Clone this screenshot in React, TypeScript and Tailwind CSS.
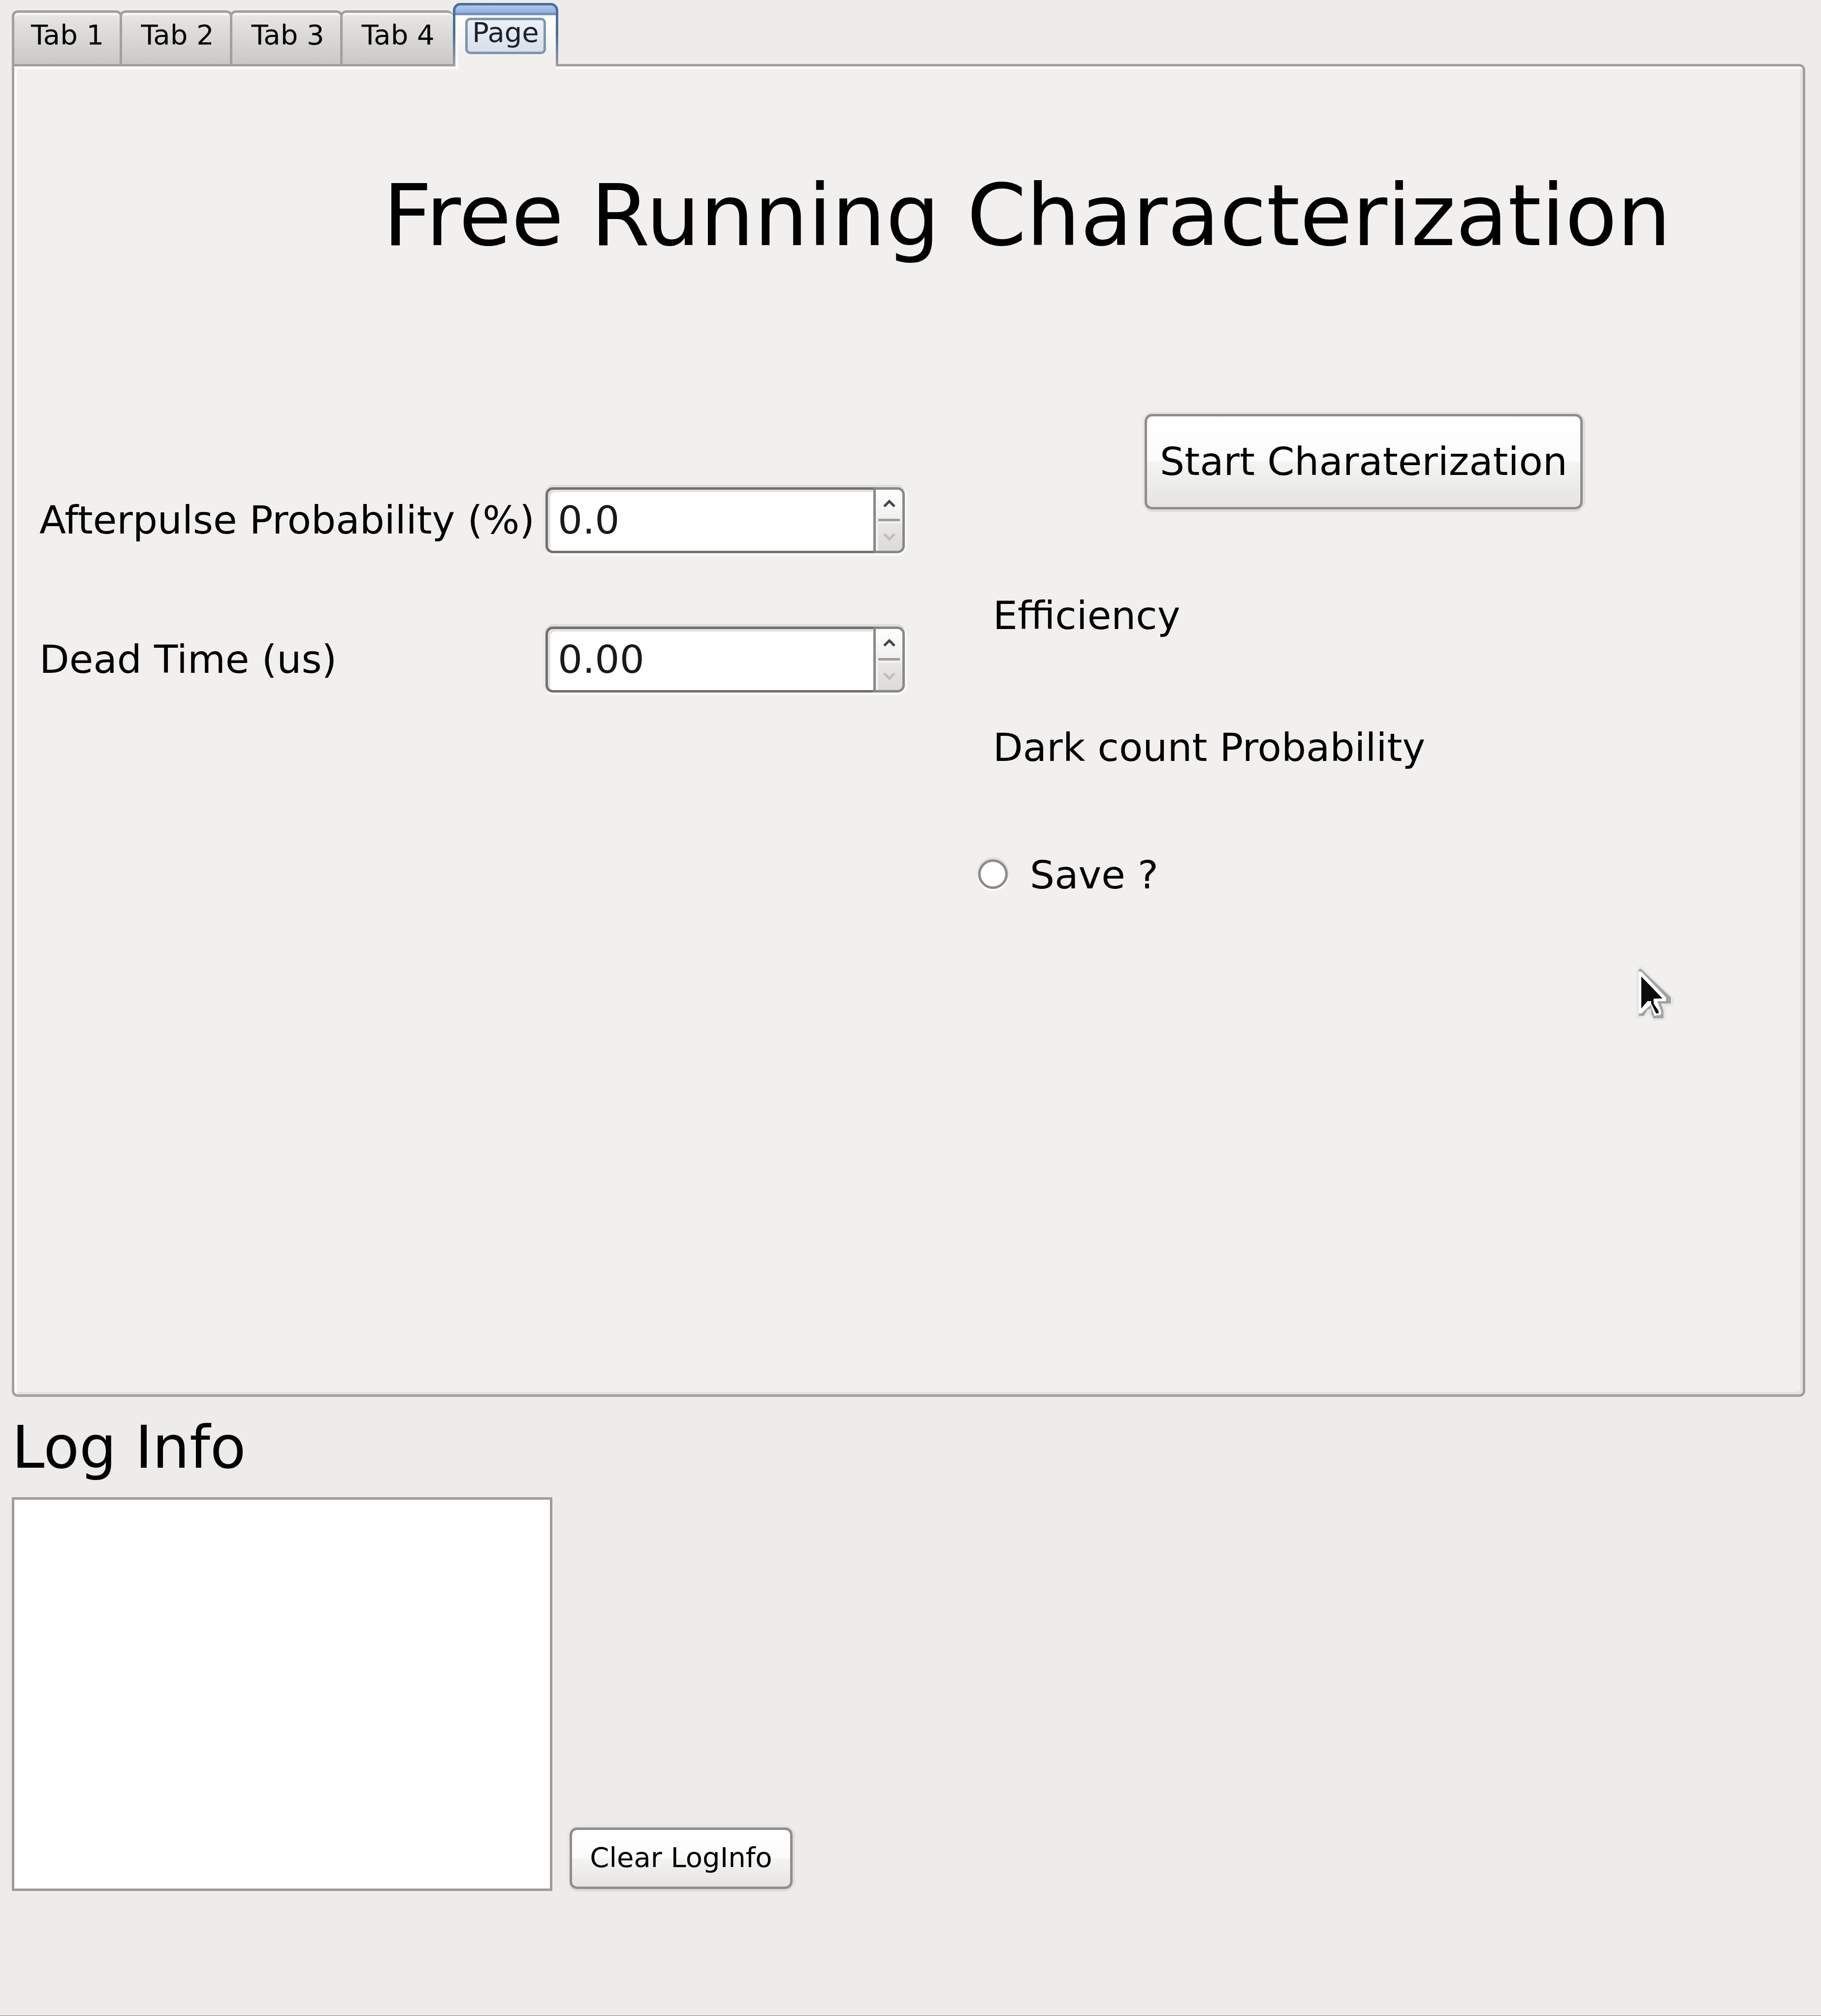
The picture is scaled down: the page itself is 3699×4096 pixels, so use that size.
import { useState } from "react";

const tabs = ["Tab 1", "Tab 2", "Tab 3", "Tab 4"];

const pushButton =
  "flex items-center justify-center rounded-[15px] border-[5px] border-[#918e8a] bg-[linear-gradient(to_bottom,#ffffff_0%,#fbfbfb_50%,#f4f4f2_50%,#e5e4e3_100%)] text-black whitespace-nowrap shadow-[0_5px_0_#dddcda,5px_0_0_#dfdedc,0_-5px_0_#e6e5e3,-5px_0_0_#e8e7e5]";

function Arrow({ down = false }: { down?: boolean }) {
  return down ? (
    <svg viewBox="0 0 25 15" className="h-[15px] w-[25px]" aria-hidden="true">
      <path d="M2 1 L12.500 11.500 L23 1" fill="none" stroke="#c1bdb9" strokeWidth="5" />
    </svg>
  ) : (
    <svg viewBox="0 0 25 15" className="h-[15px] w-[25px]" aria-hidden="true">
      <path d="M2 14 L12.500 3.500 L23 14" fill="none" stroke="#444444" strokeWidth="5" />
    </svg>
  );
}

function SpinRow({ id, label, decimals, step }: { id: string; label: string; decimals: number; step: number }) {
  const [value, setValue] = useState(0);
  return (
    <div className="flex items-center gap-6">
      <label htmlFor={id} className="w-[1004px] shrink-0 whitespace-nowrap leading-[100px]">
        {label}
      </label>
      <div className="flex h-[134px] min-w-0 flex-1 rounded-[15px] shadow-[0_-5px_0_#dfdedc,-5px_0_0_#ebeae8,0_5px_0_#fbfbfa,5px_0_0_#f8f8f7]">
        <input
          id={id}
          type="text"
          inputMode="decimal"
          readOnly
          value={value.toFixed(decimals)}
          className="min-w-0 flex-1 rounded-l-[15px] border-[5px] border-r-0 border-[#74706c] bg-white pl-5 text-[#1a1a1a] shadow-[inset_5px_5px_0_#e2e2e2] outline-none"
        />
        <div className="flex w-16 shrink-0 flex-col overflow-hidden rounded-r-[15px] border-[5px] border-[#898984]">
          <button
            type="button"
            aria-label={`Increase ${label}`}
            onClick={() => setValue(value + step)}
            className="flex h-[59px] shrink-0 items-center justify-center bg-linear-to-b from-white to-[#f0f0ef] pb-[5px]"
          >
            <Arrow />
          </button>
          <div className="h-[5px] shrink-0 border-x-[5px] border-[#f0f0ef] bg-[#a09c99]" />
          <button
            type="button"
            aria-label={`Decrease ${label}`}
            disabled={value <= 0}
            onClick={() => setValue(Math.max(0, value - step))}
            className="flex h-[60px] shrink-0 items-center justify-center bg-linear-to-b from-[#e9e8e7] to-[#dcdbda] pt-1 shadow-[inset_5px_5px_0_#f0f0ef]"
          >
            <Arrow down />
          </button>
        </div>
      </div>
    </div>
  );
}

function Pointer() {
  return (
    <svg
      viewBox="-1 -1 16 23"
      className="pointer-events-none absolute top-[1829px] left-[3295px] h-[115px] w-[80px]"
      aria-hidden="true"
    >
      <path
        d="M-1 1 L0 -1 L1 -1 L14.500 12 L14 15 L11 15 L11 20 L9 21 L6 21 L4 18 L1 20 L-1 20 Z"
        fill="#e6e6e4"
      />
      <path
        d="M0 0 H1 L13 11.500 V14 H9 L10 17 V20 H6 L5 18 V16 L3.500 16.500 L2 19 H0 Z"
        fill="#a3a3a3"
      />
      <path d="M0 1 H1 L11 11.500 V13 H7.500 L9 17 V18.500 L6.300 19 L4.800 14.500 L1 18 H0 Z" fill="#fdfdfd" />
      <path d="M1 3 L9.600 11.900 L6 12 L6 14 L8 17 V18 H7 L5 14 V13 H3.500 L1 16 Z" fill="#0c0c0c" />
    </svg>
  );
}

export default function App() {
  return (
    <main className="flex min-h-screen flex-col border-b border-[#7d7b79] bg-[#edecea] pt-1.5 pr-8 pl-6 font-['DejaVu_Sans',sans-serif] text-[79px] text-black">
      <div role="tablist" className="relative z-10 -mb-[5px] flex items-start text-[56px] leading-[64px]">
        {tabs.map((name) => (
          <button
            key={name}
            type="button"
            role="tab"
            aria-selected="false"
            className="mt-[15px] -ml-[5px] flex h-[109px] w-[229px] items-center justify-center rounded-t-[12px] border-[5px] border-b-0 border-[#a39f9c] bg-linear-to-b from-[#e8e7e5] to-[#cac9c7] pb-[14px] pl-1.5 whitespace-nowrap shadow-[inset_0_5px_0_#f5f5f3] first:ml-0 first:w-56 first:pl-0.5 nth-[4]:border-r-0 nth-[4]:pr-[5px]"
          >
            {name}
          </button>
        ))}
        <button
          type="button"
          role="tab"
          aria-selected="true"
          className="relative flex h-[129px] w-[214px] flex-col rounded-t-[15px] bg-linear-to-b from-[#4a6e9b] from-50% to-[#a39f9c] px-[5px] pt-[5px]"
        >
          <span className="h-[15px] w-full shrink-0 rounded-t-[10px] bg-linear-to-b from-[#b0c8e9] to-[#8fb2e2]" />
          <span className="h-[5px] w-full shrink-0 bg-[#7a92b3]" />
          <span className="flex w-full flex-1 items-start bg-linear-to-b from-[#fefffc] to-[#f1f0ee] to-80% px-5 pt-[5px] shadow-[inset_5px_0_0_#fbfbfa]">
            <span className="flex h-[74px] w-full items-center justify-center rounded-[10px] border-[5px] border-[#7f95b0] bg-linear-to-b from-[#ebf0f9] to-[#d8dfe7] pb-[14px] text-[#1c222b]">
              Page
            </span>
          </span>
          <span className="absolute -bottom-[5px] left-2.5 h-[5px] w-[199px] bg-[#f1f0ee]" />
        </button>
      </div>

      <section
        role="tabpanel"
        aria-label="Page"
        className="relative flex-1 rounded-[12px] rounded-tl-none border-[5px] border-[#a39f9c] bg-[#f1f0ee] pt-[203px] shadow-[inset_5px_5px_0_#ffffff,inset_-5px_-5px_0_#e3e2e0]"
      >
        <h1 className="pl-[749px] text-[173px] leading-[200px] whitespace-nowrap">Free Running Characterization</h1>
        <div className="mt-[303px] grid grid-cols-[1958fr_1675fr]">
          <div className="flex min-w-0 flex-col gap-[149px] pt-[149px] pr-[149px] pl-[51px]">
            <SpinRow id="afterpulse" label="Afterpulse Probability (%)" decimals={1} step={0.1} />
            <SpinRow id="deadtime" label="Dead Time (us)" decimals={2} step={0.01} />
          </div>
          <div className="flex min-w-0 flex-col pr-[109px] leading-[96px]">
            <button type="button" className={`${pushButton} h-[194px] w-[890px] self-center`}>
              Start Charaterization
            </button>
            <p className="mt-[168px] pl-[30px]">Efficiency</p>
            <p className="mt-[172px] pl-[30px]">Dark count Probability</p>
            <label className="mt-[163px] flex items-center gap-[45px]">
              <input
                type="radio"
                name="save"
                className="mb-1 size-[60px] appearance-none rounded-full border-[5px] border-[#8f8b87] bg-white shadow-[0_-3px_0_2px_#e1dfde,0_3px_0_2px_#f9f9f8] checked:bg-[radial-gradient(#333_40%,#fff_45%)]"
              />
              <span>Save ?</span>
            </label>
          </div>
        </div>
        <Pointer />
      </section>

      <section className="pt-[33px] pb-[253px]">
        <label htmlFor="log" className="block text-[119px] leading-[140px]">
          Log Info
        </label>
        <div className="mt-[31px] flex items-end gap-[35px]">
          <textarea
            id="log"
            readOnly
            className="h-[800px] w-[1098px] resize-none border-[5px] border-[#a09c99] bg-white outline-none"
          />
          <button type="button" className={`${pushButton} mb-1 h-[125px] w-[453px] pb-1 text-[56px] leading-[64px]`}>
            Clear LogInfo
          </button>
        </div>
      </section>
    </main>
  );
}
